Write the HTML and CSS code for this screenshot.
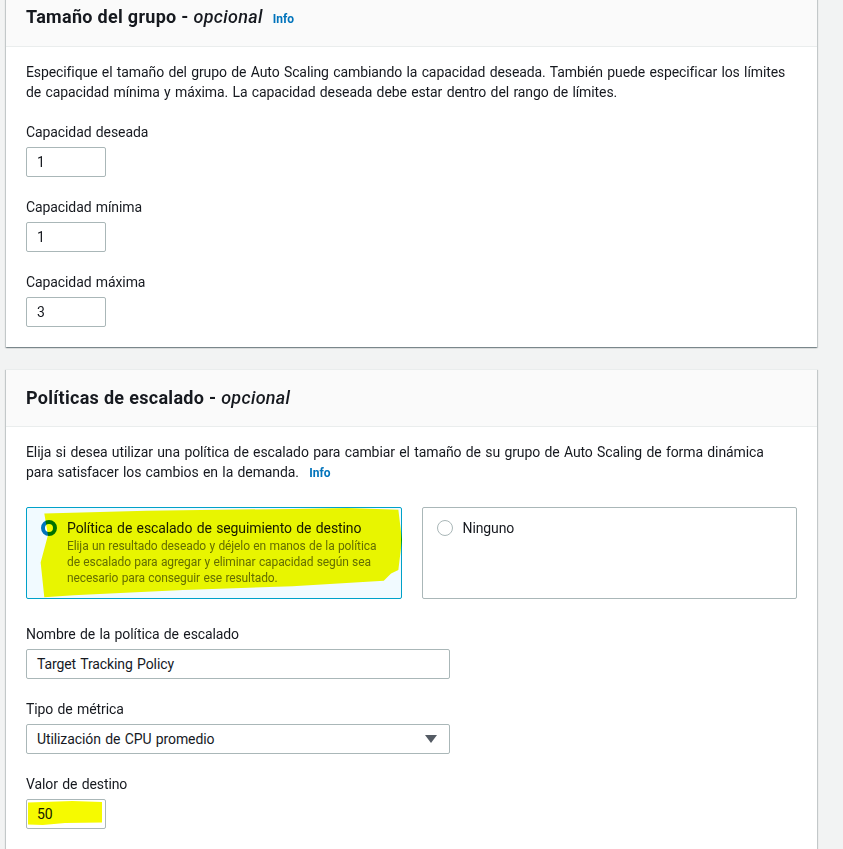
FILE: index.html
```html
<!DOCTYPE html>
<html lang="es">
<head>
<meta charset="utf-8">
<title>Auto Scaling</title>
<link rel="stylesheet" href="styles.css">
</head>
<body>
<div class="page">
  <section class="card">
    <header class="card-header">
      <h2 class="card-title">Tamaño del grupo - <i>opcional</i></h2>
      <a class="info" href="#">Info</a>
    </header>
    <div class="card-body">
      <p class="desc">Especifique el tamaño del grupo de Auto Scaling cambiando la capacidad deseada. También puede especificar los límites de capacidad mínima y máxima. La capacidad deseada debe estar dentro del rango de límites.</p>
      <div class="field">
        <label class="label">Capacidad deseada</label>
        <div class="input small">1</div>
      </div>
      <div class="field">
        <label class="label">Capacidad mínima</label>
        <div class="input small">1</div>
      </div>
      <div class="field">
        <label class="label">Capacidad máxima</label>
        <div class="input small">3</div>
      </div>
    </div>
  </section>

  <section class="card second">
    <header class="card-header">
      <h2 class="card-title">Políticas de escalado - <i>opcional</i></h2>
    </header>
    <div class="card-body">
      <p class="desc">Elija si desea utilizar una política de escalado para cambiar el tamaño de su grupo de Auto Scaling de forma dinámica para satisfacer los cambios en la demanda. <a class="info inline" href="#">Info</a></p>
      <div class="tiles">
        <div class="tile selected">
          <span class="radio checked"></span>
          <div class="tile-text">
            <div class="tile-title">Política de escalado de seguimiento de destino</div>
            <div class="tile-desc">Elija un resultado deseado y déjelo en manos de la política de escalado para agregar y eliminar capacidad según sea necesario para conseguir ese resultado.</div>
          </div>
          <span class="marker marker-tile"></span>
        </div>
        <div class="tile">
          <span class="radio"></span>
          <div class="tile-text">
            <div class="tile-title">Ninguno</div>
          </div>
        </div>
      </div>
      <div class="field first">
        <label class="label">Nombre de la política de escalado</label>
        <div class="input wide">Target Tracking Policy</div>
      </div>
      <div class="field">
        <label class="label">Tipo de métrica</label>
        <div class="input wide select">Utilización de CPU promedio
          <svg class="caret" width="12" height="8" viewBox="0 0 12 8"><path d="M0 0 H12 L6 8 Z" fill="#545b64"/></svg>
        </div>
      </div>
      <div class="field">
        <label class="label">Valor de destino</label>
        <div class="input small">50<span class="marker marker-value"></span></div>
      </div>
    </div>
  </section>
</div>
</body>
</html>
```

FILE: styles.css
```css
* { box-sizing: border-box; }
html, body {
  margin: 0;
  padding: 0;
  background: #f2f3f3;
  font-family: Roboto, "Noto Sans", sans-serif;
  color: #16191f;
  font-size: 14px;
  line-height: 20px;
  letter-spacing: -0.1px;
  word-spacing: 1px;
}
.page {
  margin-top: -12px;
  padding-left: 6px;
  width: 817px;
}
.card {
  background: #fff;
  box-shadow: 0 1px 1px 0 rgba(0,28,36,.3), 1px 1px 1px 0 rgba(0,28,36,.15), -1px 1px 1px 0 rgba(0,28,36,.15);
  border-top: 1px solid #eaeded;
}
.card.second {
  margin-top: 22px;
}
.card-header {
  background: #fafafa;
  border-bottom: 1px solid #eaeded;
  padding: 17px 20px 17px;
  display: flex;
  align-items: baseline;
  gap: 10px;
}
.card-title {
  margin: 0;
  font-size: 18px;
  line-height: 22px;
  font-weight: 700;
  letter-spacing: 0.3px;
  word-spacing: 0;
}
.card-title i {
  font-weight: 500;
}
.info {
  color: #0073bb;
  font-size: 12px;
  font-weight: 700;
  text-decoration: none;
  letter-spacing: 0;
}
.info.inline {
  display: inline-block;
  line-height: 16px;
  margin-left: 6px;
}
.card-body {
  padding: 15px 20px 20px;
}
.desc {
  margin: 0 0 20px;
  max-width: 764px;
}
.field {
  margin-top: 20px;
}
.field.first { margin-top: 25px; }
.label {
  display: block;
  line-height: 20px;
  margin-bottom: 5px;
}
.input {
  position: relative;
  height: 30px;
  border: 1px solid #aab7b8;
  border-radius: 2px;
  padding: 0 10px;
  line-height: 28px;
  background: #fff;
}
.input.small { width: 80px; }
.input.wide { width: 424px; }
.input.select {
  display: flex;
  justify-content: space-between;
  align-items: center;
}
.caret { margin-right: 2px; }
.tiles {
  display: grid;
  grid-template-columns: 1fr 1fr;
  gap: 20px;
  margin-top: 25px;
}
.tile {
  position: relative;
  height: 92px;
  border: 1px solid #aab7b8;
  border-radius: 2px;
  padding: 10px 14px;
  display: flex;
  gap: 10px;
  align-items: flex-start;
}
.tile.selected {
  border-color: #00a1c9;
  background: #f1faff;
}
.radio {
  flex: none;
  width: 16px;
  height: 16px;
  margin-top: 2px;
  border-radius: 50%;
  border: 1px solid #aab7b8;
  background: #fff;
}
.radio.checked {
  border: 4px solid #0073bb;
}
.tile-title {
  line-height: 20px;
}
.tile-desc {
  font-size: 12px;
  line-height: 16px;
  color: #687078;
  padding-right: 4px;
  word-spacing: 0.5px;
}
.marker {
  position: absolute;
  background: #f6fa00;
  mix-blend-mode: multiply;
  pointer-events: none;
}
.marker-tile {
  left: 10px;
  top: 0;
  width: 365px;
  height: 91px;
  clip-path: polygon(2% 6%, 30% 3%, 70% 1%, 85% 0%, 99% 2%, 100% 35%, 99% 68%, 97% 72%, 95% 80%, 70% 86%, 40% 90%, 10% 96%, 2% 98%, 1% 60%, 3% 30%);
}
.marker-value {
  left: 1px;
  top: 1px;
  width: 74px;
  height: 24px;
  clip-path: polygon(0 6%, 60% 0, 100% 4%, 100% 90%, 50% 92%, 20% 100%, 0 98%);
}
```
